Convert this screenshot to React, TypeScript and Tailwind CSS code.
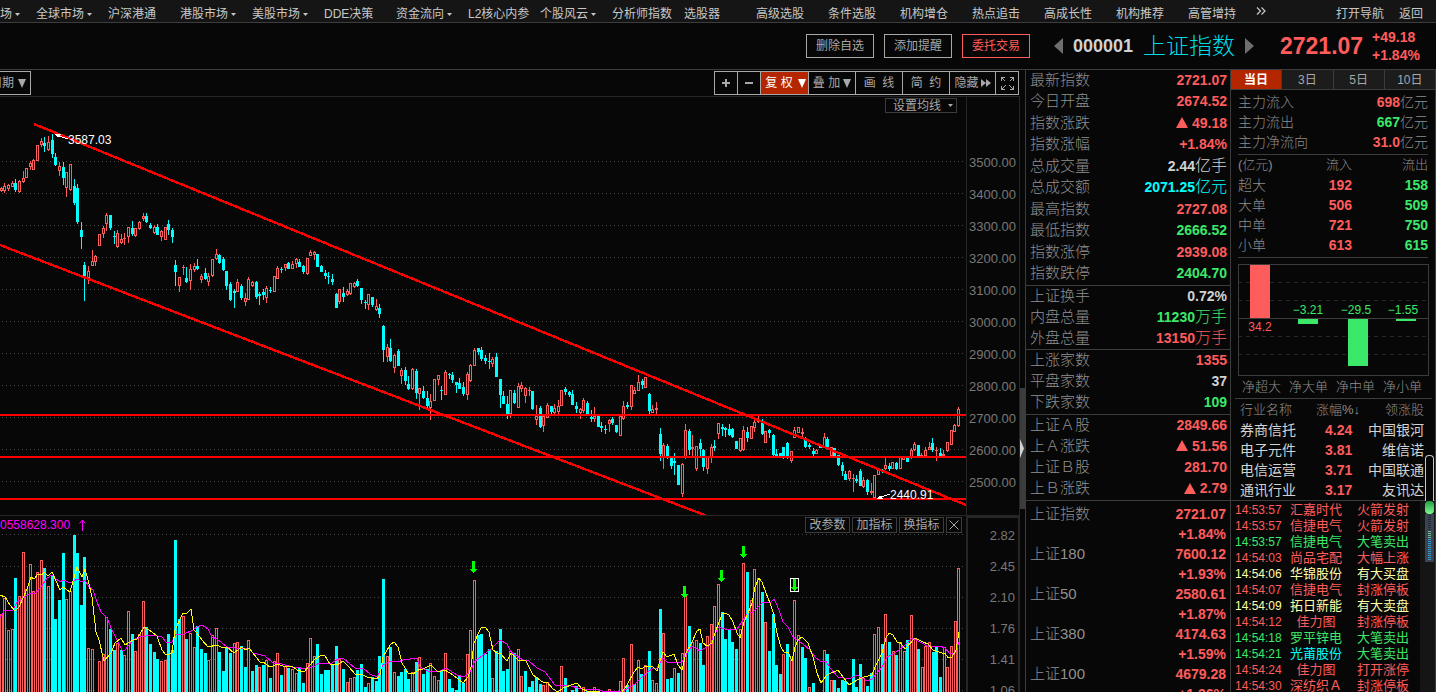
import type { ReactNode } from "react"

type Tone = "up" | "down" | "flat" | "cyan" | "pale"

const toneText: Record<Tone, string> = {
  up: "text-[#ff5c5c]",
  down: "text-[#3ce86a]",
  flat: "text-[#d2d2d2]",
  cyan: "text-[#00ffff]",
  pale: "text-[#ffffa8]",
}

const menus = [
  { name: "全球市场", more: true },
  { name: "沪深港通" },
  { name: "港股市场", more: true },
  { name: "美股市场", more: true },
  { name: "DDE决策" },
  { name: "资金流向", more: true },
  { name: "L2核心内参" },
  { name: "个股风云", more: true },
  { name: "分析师指数" },
  { name: "选股器" },
  { name: "高级选股" },
  { name: "条件选股" },
  { name: "机构增仓" },
  { name: "热点追击" },
  { name: "高成长性" },
  { name: "机构推荐" },
  { name: "高管增持" },
]

// x, direction, high, body top, body bottom, low
const candleData = `
1u 187 188 190 191|4u 183 186 190 192|8u 184 185 188 190|12u 181 183 186 186|15d 179 183 189 191|19u 180 181 191 192
23u 171 178 181 182|26u 168 168 177 177|30u 161 163 166 169|33u 159 160 169 169|37u 145 145 160 160|41u 138 141 144 146
44d 137 143 145 151|48u 136 142 149 150|52d 134 140 153 157|55d 153 157 164 165|59u 162 166 170 175|63d 162 167 177 184
66u 172 172 187 196|70u 164 164 189 190|74d 179 186 202 204|77d 184 188 221 223|81d 222 230 236 248|84d 262 265 275 300
88u 266 271 277 283|92u 250 261 265 265|95u 255 256 261 265|99u 234 234 245 245|103u 226 228 233 237|106u 213 215 223 230
110d 215 215 227 229|114d 231 236 236 243|117u 230 233 246 247|121u 234 239 242 243|124u 233 238 238 244|128u 227 227 236 242
132d 221 228 233 235|135u 228 228 235 236|139u 221 222 228 229|143u 213 216 218 220|146d 213 216 221 222|150d 223 225 227 228
154u 225 227 232 233|157d 224 227 234 234|161u 230 231 236 240|165u 227 227 239 239|168d 220 224 229 234|172d 228 230 236 242
175d 260 265 271 285|179u 277 277 285 291|183u 265 267 267 274|186d 267 278 281 282|190u 264 269 280 289|194u 263 266 269 271
197d 259 266 268 269|201u 274 276 279 282|205d 268 273 278 279|208u 273 276 281 285|212u 259 259 275 276|216u 249 254 258 259
219d 254 255 262 263|223d 257 259 269 270|226d 271 271 285 289|230d 282 284 299 300|234d 289 291 292 307|237u 279 282 291 291
241d 284 286 297 299|245u 293 298 301 305|248u 277 279 299 299|252u 281 282 285 286|256d 281 282 296 298|259d 292 294 295 304
263d 289 292 294 299|266u 286 288 297 302|270d 287 290 290 292|274u 276 276 291 291|277u 266 268 278 278|281d 267 269 269 272
285u 264 264 267 270|288d 262 263 268 268|292u 261 264 268 268|296u 258 259 263 267|299d 259 262 266 266|303d 265 266 271 273
307u 258 258 273 274|310u 250 252 255 255|314u 251 252 254 259|317d 254 254 266 266|321d 265 266 271 271|325d 270 273 275 278
328d 272 276 276 283|332d 274 279 281 284|336d 293 294 307 307|339u 289 289 301 303|343d 287 293 296 301|347u 289 291 294 295
350u 283 283 293 294|354u 282 283 286 287|357d 279 281 285 286|361d 288 288 299 303|365d 300 302 302 308|368u 294 294 304 309
372d 297 297 304 306|376u 299 306 309 310|379d 304 308 313 317|383d 325 326 349 361|387u 344 347 356 361|390d 339 348 360 361
394u 354 355 367 372|398d 349 351 365 365|401u 368 370 375 383|405d 367 370 380 384|408d 376 384 388 389|412u 368 369 388 389
416d 369 371 392 398|419u 388 388 393 409|423d 386 391 397 398|427d 391 398 405 407|430u 394 401 407 419|434u 379 379 400 400
438u 375 375 379 384|441d 386 390 390 399|445u 370 372 394 394|449d 373 374 374 378|452d 372 375 379 382|456d 382 382 384 392
459d 378 383 388 388|463d 382 387 393 395|467u 372 374 394 399|470u 364 365 380 381|474u 348 350 365 365|478d 348 348 351 354
481d 347 350 358 360|485d 355 358 360 363|489d 353 361 361 368|492u 357 359 363 366|496d 353 357 376 376|500d 379 379 394 407
503d 391 396 403 403|507d 396 404 415 418|510u 390 390 413 417|514d 390 393 402 403|518u 383 386 407 407|521u 382 385 388 391
525u 387 388 395 402|529u 387 390 390 395|532d 391 391 408 409|536u 405 416 419 424|540d 406 408 426 427|543u 416 416 425 431
547u 403 405 417 417|551d 406 406 411 413|554u 404 408 412 414|558u 400 406 411 414|561u 390 390 405 405|565d 387 389 391 394
569d 391 392 394 396|572d 390 394 404 404|576d 402 406 408 412|580u 408 409 412 418|583u 398 400 410 412|587d 401 403 414 414
591d 410 417 418 421|594u 407 416 418 421|598d 416 416 426 426|601d 422 426 427 431|605d 425 429 429 433|609u 419 420 423 431
612d 417 419 422 424|616d 425 425 431 432|620u 416 416 435 435|623u 401 406 418 419|627d 402 405 406 408|631u 385 385 406 409
634u 387 390 393 393|638u 375 382 390 390|642d 379 381 384 388|645u 377 377 387 387|649d 393 394 410 413|652u 405 409 412 412
656u 402 408 409 414|660d 428 434 453 460|663u 443 445 457 468|667d 444 446 455 458|671d 456 457 465 468|674d 453 461 462 474
678d 465 465 484 484|682u 463 464 493 496|685u 424 430 457 458|689d 429 431 449 454|692u 435 447 448 455|696u 446 446 468 470
700d 439 443 448 455|703d 449 450 466 470|707u 456 456 468 473|711u 444 447 457 462|714d 440 446 447 450|718u 423 423 433 438
722d 424 427 428 435|725d 427 428 429 436|729d 424 429 434 435|732d 428 429 436 437|736d 441 441 448 448|740u 438 438 450 451
743u 426 430 449 450|747d 427 432 437 441|751u 426 426 438 438|754u 419 422 427 431|758u 415 419 421 422|762d 419 422 433 434
765u 431 431 442 442|769d 429 430 432 437|773d 434 435 454 455|776d 449 454 455 456|780d 453 453 456 456|783d 447 447 457 458
787d 442 443 456 458|791u 451 451 460 462|794u 427 430 437 437|798u 427 427 432 432|802u 428 432 433 437|805d 437 438 446 447
809d 443 445 446 448|813d 448 451 453 455|816u 449 450 453 453|820d 444 446 447 447|824u 433 437 447 447|827d 437 439 447 447
831u 447 447 455 455|834d 448 448 456 456|838d 455 455 464 465|842d 462 465 470 475|845d 471 474 479 479|849u 470 471 478 480
853u 474 478 478 491|856d 475 479 480 482|860d 469 471 485 485|863u 477 480 486 487|867d 479 480 491 494|871u 483 491 492 494
874u 475 475 497 498|878u 469 469 474 474|882d 469 470 471 472|885u 458 465 468 469|889d 463 466 468 470|892u 462 462 468 468
896d 462 463 468 469|900u 457 457 468 468|903u 457 457 459 459|907d 456 458 461 461|911u 448 450 457 458|914u 442 444 449 450
918d 445 445 456 456|921u 453 455 456 456|925u 447 450 455 456|929u 442 447 449 449|932d 438 443 449 451|936u 447 450 450 460
940d 448 453 455 456|943u 450 454 455 455|947u 442 442 450 451|951u 430 430 444 444|954u 424 425 431 431|958u 407 409 425 426`

const candles = candleData
  .trim()
  .split(/[|\n]/)
  .map((row) => {
    const [head, ...rest] = row.split(" ")
    const [high, top, bottom, low] = rest.map(Number)
    return { x: parseInt(head), up: head.endsWith("u"), high, top, bottom, low }
  })

// x, direction, top of the bar
const volumeData = `
1u614 4u598 8u630 12u629 15d578 19u596 23u552 26u589 30u564 33u591 37u572 41u560 44d568 48u586 52d576 55d619 59d600 63d553
66u599 70u591 74d535 77d553 81d605 84d557 88u648 92u649 99u661 103u654 106u617 110d629 114d650 117u643 121d650 124u655
128u611 132d634 135u651 139u634 143u601 146d627 150d644 154d652 157d659 161u661 165u660 168d634 172d650 175d540 179d619
183u616 186d639 190u633 194u647 197d626 201d649 205d653 208u660 212u635 216u628 219d652 223d671 226d647 230d653 234u643
237u642 241d646 245d667 248u640 252d671 256d665 259u667 263d665 266u660 270d678 274u661 277u653 281d675 285u666 288d668
292u669 296u673 299d668 303d683 307u663 310u638 314u656 317d644 321d674 325d670 328d670 332d664 336d646 339u659 343d669
347u682 350u678 354u677 357d670 361d664 365d687 368u683 372d677 376d681 379d656 383d579 387u656 390d647 394u672 398d676
401d672 405d669 408d679 412u672 416d662 419u657 423d674 427d669 430u663 434u676 438u680 441d671 445u653 449d679 452d688
456d690 459d676 463d683 467u654 470u630 474u580 478d635 481d634 485d654 489d649 492u678 496d651 500d629 503d671 507d669
510u651 514d653 518u649 521u676 525d671 529d687 532d681 536d677 540d684 543u685 547u682 561u666 565d678 572d690 576d686
583u687 587d691 594u687 609u689 620u681 623u658 627d685 631u644 634d684 638u660 641d674 645u665 649d651 652u680 656u683
660d609 663u633 667d679 671d678 674u668 678d673 682u653 685u596 689d626 692u642 696u640 700d643 703d665 707u636 711u624
714u606 718u584 722d612 725d639 729d630 732d642 736d649 740u629 743u563 747d572 751u600 754u569 758u578 762d592 765u622
769d651 773d614 776d665 780d674 783u654 787d644 791u660 794u600 798u635 802d647 805d658 809u687 813d683 824u650 827d654
831u680 834d680 838d688 842d680 845d681 853d659 856d687 860d664 863u678 867d686 871d673 874u634 878u627 882d644 885u614
889d642 893u651 896d655 900u642 904u651 907d640 911u615 915u639 918d649 922u667 925u646 929u642 933d652 936d646 940d677
944u647 947u667 951u646 955u621 958u568`

const volumes = Array.from(volumeData.matchAll(/(\d+)([ud])(\d+)/g)).map((m) => ({
  x: Number(m[1]),
  up: m[2] === "u",
  top: Number(m[3]),
}))

const shortAverage =
  "0,595 5,597 10,605 15,611 19,607 27,589 31,577 34,579 38,574 42,575 44,572 48,576 52,572 60,590 63,587 70,592 77,567 82,577 85,569 88,580 92,597 96,632 99,640 104,661 111,653 115,643 121,638 125,645 133,640 137,639 144,627 152,632 157,636 162,650 166,655 172,653 175,630 183,613 187,613 191,609 194,630 197,633 202,640 208,647 217,645 223,648 227,647 234,653 242,647 246,650 249,648 260,662 263,662 270,667 278,664 285,667 292,666 297,670 304,672 315,659 322,655 325,656 330,664 337,665 343,661 348,666 356,675 361,674 367,677 377,679 380,675 383,657 390,645 394,642 398,647 402,663 408,673 413,674 420,669 423,669 431,665 438,672 445,670 453,675 463,683 468,677 471,667 474,643 481,628 485,627 489,632 493,650 497,653 500,653 507,661 511,653 518,660 526,661 533,675 540,680 544,683 547,682 553,689 558,692 563,688 577,683 582,689 587,691 600,692 622,692 627,685 634,672 638,667 642,669 645,666 653,667 657,671 661,658 663,652 667,657 674,654 678,665 682,670 686,653 692,642 697,631 700,629 703,643 707,646 712,643 715,633 722,614 725,613 729,615 733,622 737,633 740,638 744,622 748,613 752,603 755,587 759,578 762,582 766,593 770,603 773,612 777,633 781,647 784,652 788,652 792,661 795,647 798,640 802,637 808,643 813,657 817,673 821,683 827,675 838,670 843,677 849,685 857,680 864,677 872,675 875,667 882,653 886,638 889,633 893,635 897,642 900,642 905,649 915,638 923,642 928,644 933,650 942,653 945,653 948,658 952,657 956,650 959,632"

const longAverage =
  "0,618 4,611 13,610 17,602 31,593 35,594 41,587 47,578 52,575 55,578 60,582 63,580 71,583 77,579 82,582 85,580 89,587 93,590 97,602 101,612 107,618 112,630 117,640 122,650 125,650 133,640 140,637 152,635 162,637 166,642 172,642 176,634 182,635 193,630 197,627 202,625 208,629 212,637 217,639 227,647 235,648 249,649 253,653 265,656 273,663 282,664 292,667 297,667 304,669 315,666 319,663 330,664 340,658 344,659 355,668 364,669 370,674 377,677 383,665 391,661 398,662 403,660 417,658 420,667 428,671 440,671 446,668 457,675 464,677 470,672 475,661 482,656 492,648 500,640 507,644 511,652 517,656 523,660 529,661 537,668 545,672 555,685 558,686 567,685 582,689 597,689 602,691 622,692 635,684 642,677 653,668 657,668 663,658 667,662 682,662 687,653 692,646 697,649 700,651 710,645 718,627 725,629 737,629 743,620 748,613 753,612 758,607 763,602 770,603 774,599 777,605 780,613 783,622 788,627 793,637 803,644 810,650 815,657 820,661 826,661 830,668 838,677 849,679 857,675 867,681 872,679 882,667 887,657 895,653 905,645 912,638 922,643 927,646 940,646 945,648 950,654 955,653 959,642"

const signals = [
  { x: 473, y: 561 },
  { x: 684, y: 586 },
  { x: 721, y: 570 },
  { x: 743, y: 546 },
  { x: 794, y: 579 },
]

const quotes: { label: string; value: string; unit?: string; rise?: boolean; tone: Tone }[][] = [
  [
    { label: "最新指数", value: "2721.07", tone: "up" },
    { label: "今日开盘", value: "2674.52", tone: "up" },
    { label: "指数涨跌", value: "49.18", rise: true, tone: "up" },
    { label: "指数涨幅", value: "+1.84%", tone: "up" },
    { label: "总成交量", value: "2.44", unit: "亿手", tone: "flat" },
    { label: "总成交额", value: "2071.25", unit: "亿元", tone: "cyan" },
    { label: "最高指数", value: "2727.08", tone: "up" },
    { label: "最低指数", value: "2666.52", tone: "down" },
    { label: "指数涨停", value: "2939.08", tone: "up" },
    { label: "指数跌停", value: "2404.70", tone: "down" },
  ],
  [
    { label: "上证换手", value: "0.72%", tone: "flat" },
    { label: "内盘总量", value: "11230", unit: "万手", tone: "down" },
    { label: "外盘总量", value: "13150", unit: "万手", tone: "up" },
  ],
  [
    { label: "上涨家数", value: "1355", tone: "up" },
    { label: "平盘家数", value: "37", tone: "flat" },
    { label: "下跌家数", value: "109", tone: "down" },
  ],
  [
    { label: "上证Ａ股", value: "2849.66", tone: "up" },
    { label: "上Ａ涨跌", value: "51.56", rise: true, tone: "up" },
    { label: "上证Ｂ股", value: "281.70", tone: "up" },
    { label: "上Ｂ涨跌", value: "2.79", rise: true, tone: "up" },
  ],
]

const sectionHeights = ["h-[216px]", "h-16", "h-[65px]", "h-[86px]"]

const indexes = [
  { name: "上证指数", value: "2721.07", change: "+1.84%" },
  { name: "上证180", value: "7600.12", change: "+1.93%" },
  { name: "上证50", value: "2580.61", change: "+1.87%" },
  { name: "上证380", value: "4174.63", change: "+1.59%" },
  { name: "上证100", value: "4679.28", change: "+1.36%" },
]

const flows = [
  ["超大", "192", "158"],
  ["大单", "506", "509"],
  ["中单", "721", "750"],
  ["小单", "613", "615"],
]

const industries = [
  ["券商信托", "4.24", "中国银河"],
  ["电子元件", "3.81", "维信诺"],
  ["电信运营", "3.71", "中国联通"],
  ["通讯行业", "3.17", "友讯达"],
]

const events: [string, string, string, Tone, Tone][] = [
  ["14:53:57", "汇嘉时代", "火箭发射", "up", "up"],
  ["14:53:57", "信捷电气", "火箭发射", "up", "up"],
  ["14:53:57", "信捷电气", "大笔卖出", "down", "down"],
  ["14:54:03", "尚品宅配", "大幅上涨", "up", "up"],
  ["14:54:06", "华锦股份", "有大买盘", "pale", "pale"],
  ["14:54:07", "信捷电气", "封涨停板", "up", "up"],
  ["14:54:09", "拓日新能", "有大卖盘", "pale", "pale"],
  ["14:54:12", "佳力图", "封涨停板", "up", "up"],
  ["14:54:18", "罗平锌电", "大笔卖出", "down", "down"],
  ["14:54:21", "光莆股份", "大笔卖出", "down", "cyan"],
  ["14:54:24", "佳力图", "打开涨停", "up", "up"],
  ["14:54:30", "深纺织Ａ", "封涨停板", "up", "up"],
]

function Caret() {
  return (
    <svg viewBox="0 0 5 3" className="w-[5px] h-[3px] shrink-0" fill="currentColor">
      <path d="M0 0h5L2.5 3z" />
    </svg>
  )
}

function DownArrow() {
  return (
    <svg viewBox="0 0 8 9" className="w-2 h-[9px] shrink-0" fill="currentColor">
      <path d="M0 0h8L4 9z" />
    </svg>
  )
}

function UpArrow() {
  return (
    <svg viewBox="0 0 12 11" className="w-3 h-[11px] shrink-0" fill="currentColor">
      <path d="M6 0l6 11H0z" />
    </svg>
  )
}

function NavBar() {
  return (
    <nav className="flex h-[23px] pt-1.5 items-center bg-[#151515] border-b border-[#3c3c3c] text-[12px] text-[#c8c8c8] whitespace-nowrap shrink-0">
      <a href="#" className="w-9 flex items-center gap-[3px] shrink-0">场<Caret /></a>
      {menus.map((item) => (
        <a href="#" key={item.name} className="w-[72px] flex items-center gap-[3px] shrink-0">
          {item.name}
          {item.more && <Caret />}
        </a>
      ))}
      <button className="-mt-1.5" aria-label="更多">
        <svg viewBox="0 0 10 8" className="w-[10px] h-2 -ml-1" fill="none" stroke="currentColor" strokeWidth="1.2">
          <path d="M1 0.5l3.5 3.5L1 7.5M5.5 0.5L9 4 5.5 7.5" />
        </svg>
      </button>
      <div className="ml-auto pr-[13px] flex gap-[15px]">
        <a href="#">打开导航</a>
        <a href="#">返回</a>
      </div>
    </nav>
  )
}

function Header() {
  return (
    <header className="flex h-[47px] items-center justify-end border-b border-[#3c3c3c] whitespace-nowrap shrink-0">
      <div className="flex gap-[10px] text-[12px] text-[#a8a8a8]">
        <button className="w-[68px] h-6 border border-[#a8a8a8]">删除自选</button>
        <button className="w-[68px] h-6 border border-[#a8a8a8]">添加提醒</button>
        <button className="w-[68px] h-6 border border-[#ff5c5c] text-[#ff5c5c]">委托交易</button>
      </div>
      <button className="ml-6 text-[#6e6e6e]" aria-label="上一个">
        <svg viewBox="0 0 9 16" className="w-[9px] h-4" fill="currentColor"><path d="M9 0v16L0 8z" /></svg>
      </button>
      <span className="ml-[10px] text-[18px] font-bold text-[#d2d2d2]">000001</span>
      <h1 className="ml-[10px] text-[23px] leading-7 font-light text-[#00dce6]">上证指数</h1>
      <button className="ml-[10px] text-[#6e6e6e]" aria-label="下一个">
        <svg viewBox="0 0 9 16" className="w-[9px] h-4" fill="currentColor"><path d="M0 0v16l9-8z" /></svg>
      </button>
      <strong className="w-[92px] ml-[26px] text-[23px] text-[#ff5c5c]">2721.07</strong>
      <div className="w-16 text-[14px] leading-[18px] font-bold text-[#ff5c5c]">
        <div>+49.18</div>
        <div>+1.84%</div>
      </div>
    </header>
  )
}

function Toolbar() {
  return (
    <div className="flex h-[27px] pt-px pr-px items-start justify-between border-b border-[#262626] text-[12px] text-[#a8a8a8] whitespace-nowrap shrink-0">
      <button className="w-[31px] h-6 border border-l-0 border-[#a8a8a8] flex items-center justify-end gap-1 pr-1 overflow-hidden">
        <span>周期</span>
        <DownArrow />
      </button>
      <div className="flex h-6 border border-[#a8a8a8] divide-x divide-[#a8a8a8]">
        <button className="w-[23px] flex items-center justify-center" aria-label="放大">
          <svg viewBox="0 0 8 8" className="w-2 h-2" fill="currentColor"><path d="M3 0h2v3h3v2H5v3H3V5H0V3h3z" /></svg>
        </button>
        <button className="w-[23px] flex items-center justify-center" aria-label="缩小">
          <span className="w-2 h-0.5 bg-[#a8a8a8]" />
        </button>
        <button className="w-12 pl-0.5 flex items-center justify-center gap-[5px] bg-[#b32600] text-white">
          复 权 <DownArrow />
        </button>
        <button className="w-[47px] flex items-center justify-center gap-[3px]">
          叠 加<DownArrow />
        </button>
        <button className="w-[47px]">画&nbsp; 线</button>
        <button className="w-[47px]">简&nbsp; 约</button>
        <button className="w-[46px] flex items-center justify-center gap-0.5">
          隐藏
          <svg viewBox="0 0 10 8" className="w-[10px] h-2" fill="currentColor"><path d="M0 0l5 4-5 4zM5 0l5 4-5 4z" /></svg>
        </button>
        <button className="w-[22px] flex items-center justify-center" aria-label="全屏">
          <svg viewBox="0 0 13 13" className="w-[13px] h-[13px]" fill="none" stroke="currentColor" shapeRendering="crispEdges">
            <path d="M0.5 4V0.5H4M9 0.5h3.5V4M12.5 9v3.5H9M4 12.5H0.5V9M1 1l3.5 3.5M12 1L8.5 4.5M12 12L8.5 8.5M1 12l3.5-3.5" />
          </svg>
        </button>
      </div>
    </div>
  )
}

function PriceChart() {
  return (
    <svg viewBox="0 97 966 418" preserveAspectRatio="xMaxYMin slice" className="w-full h-[418px]" shapeRendering="crispEdges">
      {Array.from({ length: 11 }, (_, i) => (
        <path key={i} d={`M2 ${161.5 + i * 32}H966`} stroke="#4b4b4b" strokeDasharray="1 3" />
      ))}
      {candles.map((c) => (
        <g key={c.x}>
          <rect x={c.x} y={c.high} width="1" height={c.low - c.high + 1} fill={c.up ? "#ff5c5c" : "#00ffff"} />
          {c.up ? (
            <rect x={c.x - 0.5} y={c.top + 0.5} width="2" height={Math.max(c.bottom - c.top, 0.1)} fill="#070707" stroke="#ff5c5c" />
          ) : (
            <rect x={c.x - 1} y={c.top} width="3" height={c.bottom - c.top + 1} fill="#00ffff" />
          )}
        </g>
      ))}
      <g stroke="#ff0000" strokeWidth="2">
        <path d="M34 124L966 505M0 245L707 516" strokeWidth="2.4" />
        <path d="M0 415H966M0 457H966M0 499H966" />
      </g>
      <g stroke="#ffffff" fill="#ffffff">
        <path d="M56 135l12 4" />
        <path d="M54 134l7 0-3 3z" stroke="none" />
        <path d="M878 498l12-4" />
        <path d="M876 499l4-3 3 3z" stroke="none" />
      </g>
      <g fill="#ffffff" fontSize="12">
        <text x="68" y="144">3587.03</text>
        <text x="890" y="499">2440.91</text>
      </g>
    </svg>
  )
}

function VolumeChart() {
  return (
    <svg viewBox="0 516 966 176" preserveAspectRatio="xMaxYMin slice" className="w-full h-[176px]" shapeRendering="crispEdges">
      {Array.from({ length: 6 }, (_, i) => (
        <path key={i} d={`M2 ${i === 0 ? 534.5 : 535.5 + i * 31}H966`} stroke="#4b4b4b" strokeDasharray="1 3" />
      ))}
      {volumes.map((v) =>
        v.up ? (
          <rect key={v.x} x={v.x - 0.5} y={v.top + 0.5} width="2" height={700 - v.top} fill="#070707" stroke="#ff5c5c" />
        ) : (
          <rect key={v.x} x={v.x - 1} y={v.top} width="3" height={700 - v.top} fill="#00ffff" />
        )
      )}
      <polyline points={longAverage} fill="none" stroke="#ff00ff" />
      <polyline points={shortAverage} fill="none" stroke="#ffff00" />
      {signals.map((s) => (
        <path key={s.x} d={`M${s.x - 1} ${s.y}h3v8h2l-3.5 4-3.5-4h2z`} fill="#00ff00" />
      ))}
      <rect x="790.5" y="578.5" width="8" height="13" fill="none" stroke="#ffffff" />
    </svg>
  )
}

function SmallButton({ children }: { children: ReactNode }) {
  return <button className="w-[45px] h-4 border border-[#3c3c3c] bg-[#070707]">{children}</button>
}

function ChartPane() {
  return (
    <section className="flex-1 min-w-0 flex flex-col">
      <Toolbar />
      <div className="flex border-b border-[#262626] shrink-0">
        <div className="relative flex-1 min-w-0">
          <PriceChart />
          <button className="absolute top-px right-[9px] w-[72px] h-[15px] flex items-center justify-center gap-[7px] pl-1 border border-[#3c3c3c] text-[12px] leading-3 text-[#a8a8a8]">
            设置均线 <Caret />
          </button>
        </div>
        <ul className="w-[54px] pt-[50px] pl-0.5 border-x border-[#262626] text-[13px] leading-8 text-[#787878]">
          {["3500.00", "3400.00", "3300.00", "3200.00", "3100.00", "3000.00", "2900.00", "2800.00", "2700.00", "2600.00", "2500.00"].map((p) => (
            <li key={p}>{p}</li>
          ))}
        </ul>
      </div>
      <div className="flex flex-1 min-h-0">
        <div className="relative flex-1 min-w-0">
          <VolumeChart />
          <p className="absolute top-0 left-0 flex items-center gap-[9px] text-[12px] leading-[18px] text-[#ff00ff]">
            0558628.300
            <svg viewBox="0 0 7 12" className="w-[7px] h-3" fill="none" stroke="currentColor"><path d="M3.5 12V1M0.5 4.5l3-3.5 3 3.5" /></svg>
          </p>
          <div className="absolute top-px right-1 flex gap-[2px] text-[12px] leading-3 text-[#a8a8a8]">
            <SmallButton>改参数</SmallButton>
            <SmallButton>加指标</SmallButton>
            <SmallButton>换指标</SmallButton>
            <button className="w-4 h-4 border border-[#3c3c3c] bg-[#070707] flex items-center justify-center" aria-label="关闭">
              <svg viewBox="0 0 10 10" className="w-[10px] h-[10px]" stroke="currentColor"><path d="M0.5 0.5l9 9M9.5 0.5l-9 9" /></svg>
            </button>
          </div>
        </div>
        <ul className="w-[54px] pt-0.5 pr-[3px] border-x-2 border-t-2 border-[#262626] text-[13px] leading-[31px] text-[#787878] text-right">
          {["2.82", "2.45", "2.10", "1.76", "1.41", "1.06"].map((v) => (
            <li key={v}>{v}</li>
          ))}
        </ul>
      </div>
    </section>
  )
}

function Splitter() {
  return (
    <div className="w-[5px] pt-[318px] shrink-0">
      <button className="w-full h-[121px] flex items-center bg-[#3c3c3c]" aria-label="收起">
        <svg viewBox="0 0 4 19" className="w-1 h-[19px]" fill="#d2d2d2"><path d="M0 0l4 9.5L0 19z" /></svg>
      </button>
    </div>
  )
}

function QuotePanel() {
  return (
    <section className="w-[205px] border-l border-[#3c3c3c] text-[15px] whitespace-nowrap shrink-0">
      {quotes.map((group, i) => (
        <dl key={i} className={`${sectionHeights[i]} flex flex-col border-b border-[#3c3c3c]`}>
          {group.map((q) => (
            <div key={q.label} className="flex-1 min-h-0 pl-1 pr-[3px] pb-0.5 flex items-center justify-between">
              <dt className="leading-5 font-light text-[#909090]">{q.label}</dt>
              <dd className={`flex items-center text-[14px] leading-5 font-bold ${toneText[q.tone]}`}>
                {q.rise && <span className="mr-1"><UpArrow /></span>}
                {q.value}
                {q.unit && <span className="text-[16px] leading-5 font-light">{q.unit}</span>}
              </dd>
            </div>
          ))}
        </dl>
      ))}
      <dl className="pt-[3px]">
        {indexes.map((item) => (
          <div key={item.name} className="px-1 flex justify-between leading-5">
            <dt className="font-light text-[#909090]">{item.name}</dt>
            <dd className="text-right text-[14px] leading-5 font-bold text-[#ff5c5c]">
              <div>{item.value}</div>
              <div>{item.change}</div>
            </dd>
          </div>
        ))}
      </dl>
    </section>
  )
}

function FlowBars() {
  return (
    <svg viewBox="0 0 191 112" className="w-full h-28" shapeRendering="crispEdges">
      <path d="M0 18.5H190M0 36.5H190M0 72.5H190M0 90.5H190" stroke="#262626" strokeDasharray="4 4" />
      <rect x="0.5" y="0.5" width="190" height="111" fill="none" stroke="#3c3c3c" />
      <path d="M0 54.5H190" stroke="#3c3c3c" />
      <rect x="12" y="1" width="20" height="53" fill="#ff5c5c" />
      <g fill="#3ce86a">
        <rect x="60" y="55" width="20" height="5" />
        <rect x="110" y="55" width="20" height="47" />
        <rect x="158" y="55" width="20" height="2" />
      </g>
      <g fontSize="12" textAnchor="middle">
        <text x="22" y="67" fill="#ff5c5c">34.2</text>
        <text x="70" y="50" fill="#3ce86a">−3.21</text>
        <text x="118" y="50" fill="#3ce86a">−29.5</text>
        <text x="165" y="50" fill="#3ce86a">−1.55</text>
      </g>
    </svg>
  )
}

function FlowPanel() {
  return (
    <section className="relative w-[206px] border-x border-[#3c3c3c] text-[14px] whitespace-nowrap shrink-0 flex flex-col">
      <div className="h-5 flex border-b border-[#3c3c3c] divide-x divide-[#3c3c3c] text-[12px] leading-[18px] text-[#a8a8a8] shrink-0">
        <button className="flex-1 bg-[#b32600] text-white font-bold">当日</button>
        <button className="flex-1 bg-[#1c1c1c]">3日</button>
        <button className="flex-1 bg-[#1c1c1c]">5日</button>
        <button className="flex-1 bg-[#1c1c1c]">10日</button>
      </div>

      <dl className="h-[65px] ml-[7px] mr-[7px] pt-[2px] border-b border-[#3c3c3c] leading-5 font-light text-[#8c8c8c] shrink-0">
        <div className="flex justify-between"><dt>主力流入</dt><dd><b className="font-bold text-[#ff5c5c]">698</b>亿元</dd></div>
        <div className="flex justify-between"><dt>主力流出</dt><dd><b className="font-bold text-[#3ce86a]">667</b>亿元</dd></div>
        <div className="flex justify-between"><dt>主力净流向</dt><dd><b className="font-bold text-[#ff5c5c]">31.0</b>亿元</dd></div>
      </dl>

      <div className="h-[103px] ml-[7px] mr-[7px] border-b border-[#3c3c3c] shrink-0">
        <table className="w-full leading-5 text-right">
          <thead className="text-[13px] text-[#8c8c8c]">
            <tr>
              <th className="font-light text-left">(亿元)</th>
              <th className="font-light w-14">流入</th>
              <th className="font-light w-[76px]">流出</th>
            </tr>
          </thead>
          <tbody>
            {flows.map((row) => (
              <tr key={row[0]}>
                <td className="font-light text-left text-[#8c8c8c]">{row[0]}</td>
                <td className="font-bold text-[#ff5c5c]">{row[1]}</td>
                <td className="font-bold text-[#3ce86a]">{row[2]}</td>
              </tr>
            ))}
          </tbody>
        </table>
      </div>

      <div className="pt-[6px] ml-[7px] mr-[6px] shrink-0">
        <FlowBars />
      </div>
      <div className="h-[23px] ml-1 mr-[3px] pl-[7px] flex gap-2 items-center border-b border-[#3c3c3c] text-[13px] font-light text-[#909090] shrink-0">
        <span>净超大</span>
        <span>净大单</span>
        <span>净中单</span>
        <span>净小单</span>
      </div>

      <div className="h-[102px] pt-px border-b border-[#3c3c3c] shrink-0">
        <table className="w-[184px] ml-[9px] leading-5">
          <thead className="text-[13px] text-[#909090]">
            <tr>
              <th className="font-light text-left">行业名称</th>
              <th className="font-light text-left w-[52px]">涨幅%↓</th>
              <th className="font-light text-right w-14">领涨股</th>
            </tr>
          </thead>
          <tbody className="text-[#d2d2d2]">
            {industries.map((row) => (
              <tr key={row[0]}>
                <td>{row[0]}</td>
                <td className="pl-[9px] font-bold text-[#ff5c5c]">{row[1]}</td>
                <td className="text-right">{row[2]}</td>
              </tr>
            ))}
          </tbody>
        </table>
      </div>

      <div className="flex flex-1 min-h-0 overflow-hidden">
        <ul className="flex-1 pt-px pl-1 text-[13px]">
          {events.map(([time, name, action, tone, nameTone], i) => (
            <li key={i} className={`h-4 flex items-center leading-4 ${toneText[tone]}`}>
              <time className="w-[55px] text-[12px]">{time}</time>
              <span className={`w-[52px] mr-[15px] text-center ${toneText[nameTone]}`}>{name}</span>
              <span>{action}</span>
            </li>
          ))}
        </ul>
        <div className="w-[15px] bg-[#151515]" />
      </div>

      <div className="absolute top-[385px] right-px flex flex-col items-center">
        <div className="w-[9px] h-[46px] border border-b-0 border-[#c8c8c8] rounded-t-sm bg-[#070707]" />
        <div className="w-[9px] h-[13px] rounded-sm bg-linear-to-b from-[#1ca046] to-[#7dfa8c]" />
        <div className="w-[9px] h-12 flex justify-center bg-[#3a4452]">
          <svg viewBox="0 0 3 48" className="w-[3px] h-12" shapeRendering="crispEdges">
            <path d="M1.5 1V16" stroke="#222a33" strokeWidth="3" strokeDasharray="1 1" />
            <path d="M1.5 17V24" stroke="#6ebe8c" strokeWidth="3" strokeDasharray="1 1" />
            <path d="M1.5 25V46" stroke="#2d9bd2" strokeWidth="3" strokeDasharray="1 1" />
          </svg>
        </div>
      </div>
    </section>
  )
}

export default function App() {
  return (
    <div className="h-screen flex flex-col overflow-hidden bg-[#070707] font-['Liberation_Sans','Noto_Sans_CJK_SC',sans-serif]">
      <NavBar />
      <Header />
      <main className="flex flex-1 min-h-0">
        <ChartPane />
        <Splitter />
        <QuotePanel />
        <FlowPanel />
      </main>
    </div>
  )
}
